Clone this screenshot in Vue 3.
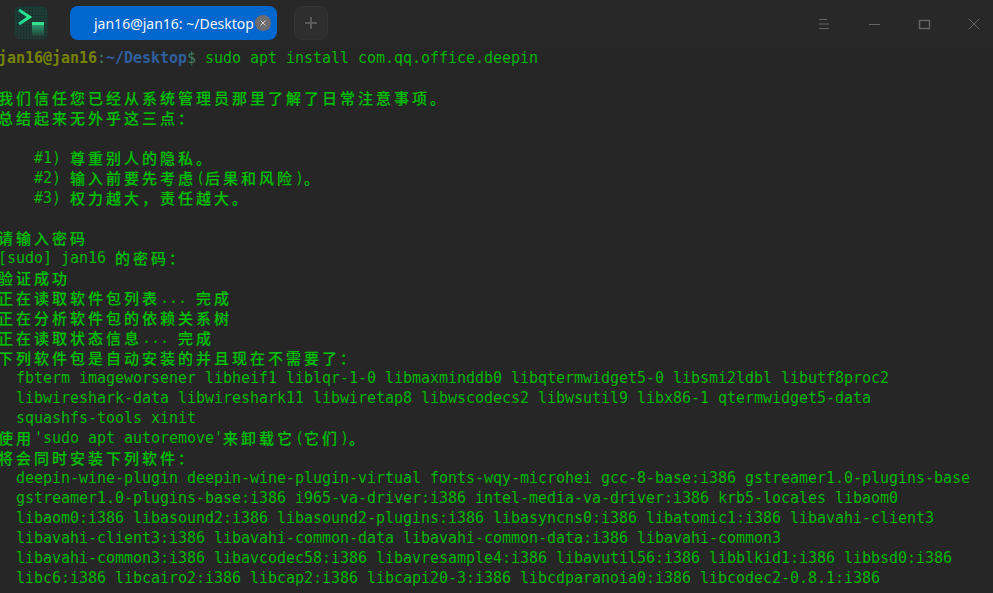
<script setup>
const lines = [
  '',
  '我们信任您已经从系统管理员那里了解了日常注意事项。',
  '总结起来无外乎这三点：',
  '',
  '    #1) 尊重别人的隐私。',
  '    #2) 输入前要先考虑(后果和风险)。',
  '    #3) 权力越大，责任越大。',
  '',
  '请输入密码',
  '[sudo] jan16 的密码：',
  '验证成功',
  '正在读取软件包列表... 完成',
  '正在分析软件包的依赖关系树',
  '正在读取状态信息... 完成',
  '下列软件包是自动安装的并且现在不需要了：',
  '  fbterm imageworsener libheif1 liblqr-1-0 libmaxminddb0 libqtermwidget5-0 libsmi2ldbl libutf8proc2',
  '  libwireshark-data libwireshark11 libwiretap8 libwscodecs2 libwsutil9 libx86-1 qtermwidget5-data',
  '  squashfs-tools xinit',
  "使用'sudo apt autoremove'来卸载它(它们)。",
  '将会同时安装下列软件：',
  '  deepin-wine-plugin deepin-wine-plugin-virtual fonts-wqy-microhei gcc-8-base:i386 gstreamer1.0-plugins-base',
  '  gstreamer1.0-plugins-base:i386 i965-va-driver:i386 intel-media-va-driver:i386 krb5-locales libaom0',
  '  libaom0:i386 libasound2:i386 libasound2-plugins:i386 libasyncns0:i386 libatomic1:i386 libavahi-client3',
  '  libavahi-client3:i386 libavahi-common-data libavahi-common-data:i386 libavahi-common3',
  '  libavahi-common3:i386 libavcodec58:i386 libavresample4:i386 libavutil56:i386 libblkid1:i386 libbsd0:i386',
  '  libc6:i386 libcairo2:i386 libcap2:i386 libcapi20-3:i386 libcdparanoia0:i386 libcodec2-0.8.1:i386',
]

const rows = lines.map((text) =>
  (text.match(/[^\x00-\x7f]+|[\x00-\x7f]+/g) || ['']).map((t) => ({
    t,
    cjk: /[^\x00-\x7f]/.test(t),
  })),
)
</script>

<template>
  <div class="window">
    <header class="titlebar">
      <svg class="logo" viewBox="0 0 34 34" width="34" height="34">
        <defs>
          <linearGradient id="logoBg" x1="0" y1="0" x2="0" y2="1">
            <stop offset="0" stop-color="#1d3f38" />
            <stop offset="1" stop-color="#233a34" />
          </linearGradient>
          <linearGradient id="logoFade" x1="0" y1="0" x2="0" y2="1">
            <stop offset="0" stop-color="#2b9a6e" />
            <stop offset="1" stop-color="#2b9a6e" stop-opacity="0.1" />
          </linearGradient>
          <linearGradient id="logoChev" x1="0" y1="0" x2="1" y2="0">
            <stop offset="0" stop-color="#1fcf9a" />
            <stop offset="1" stop-color="#2cf08e" />
          </linearGradient>
          <pattern id="logoGrid" width="3" height="3" patternUnits="userSpaceOnUse">
            <path d="M0 0.5 H3 M0.5 0 V3" stroke="#000" stroke-opacity="0.12" stroke-width="1" />
          </pattern>
        </defs>
        <rect width="34" height="34" rx="7" fill="url(#logoBg)" />
        <rect width="34" height="34" rx="7" fill="url(#logoGrid)" />
        <path d="M5 4 L15.5 11 L5 18" fill="none" stroke="url(#logoChev)" stroke-width="3" />
        <rect x="18" y="19" width="12" height="11" fill="url(#logoFade)" />
        <rect x="18" y="16" width="12" height="3" fill="#35e08c" />
      </svg>
      <div class="tab">
        <span class="tab-title">jan16@jan16: ~/Desktop</span>
        <span class="tab-close">
          <svg viewBox="0 0 8 8" width="8" height="8">
            <path d="M1.5 1.5 L6.5 6.5 M6.5 1.5 L1.5 6.5" stroke="#cfcfcf" stroke-width="1" />
          </svg>
        </span>
      </div>
      <div class="add">
        <svg viewBox="0 0 14 14" width="14" height="14">
          <path d="M7 1 V13 M1 7 H13" stroke="#5a5a5a" stroke-width="2" />
        </svg>
      </div>
      <div class="controls">
        <svg viewBox="0 0 30 16" width="30" height="16">
          <path d="M10 3.5 H18 M10 8 H20 M10 12.5 H20" stroke="#666" stroke-width="1" />
        </svg>
        <svg viewBox="0 0 30 16" width="30" height="16">
          <path d="M10 8.5 H21" stroke="#666" stroke-width="1" />
        </svg>
        <svg viewBox="0 0 30 16" width="30" height="16">
          <rect x="10.5" y="4.5" width="10" height="8" fill="none" stroke="#666" stroke-width="1.4" />
        </svg>
        <svg viewBox="0 0 30 16" width="30" height="16">
          <path d="M9.5 2.5 L20.5 13.5 M20.5 2.5 L9.5 13.5" stroke="#666" stroke-width="1" />
        </svg>
      </div>
    </header>
    <main class="terminal">
      <div class="line"><b class="user">jan16@jan16</b><span class="colon">:</span><b class="path">~/Desktop</b><span class="dollar">$</span> sudo apt install com.qq.office.deepin</div>
      <div v-for="(row, i) in rows" :key="i" class="line"><span
          v-for="(run, j) in row"
          :key="j"
          :class="{ cjk: run.cjk }"
        >{{ run.t }}</span></div>
    </main>
  </div>
</template>

<style scoped>
.window {
  width: 993px;
  height: 593px;
  overflow: hidden;
  background: #262626;
  display: flex;
  flex-direction: column;
}
.titlebar {
  height: 48px;
  flex: none;
  background: #282828;
  display: flex;
  align-items: flex-start;
  padding: 6px 4px 0 14px;
  box-sizing: border-box;
}
.logo {
  flex: none;
  margin-right: 22px;
}
.tab {
  width: 207px;
  height: 34px;
  box-sizing: border-box;
  background: #0067cf;
  border-radius: 8px;
  display: flex;
  align-items: center;
  padding-left: 24px;
  color: #f2f6fb;
  font: 14px "Noto Sans", sans-serif;
  margin-right: 17px;
}
.tab-title {
  white-space: nowrap;
  width: 161px;
  flex: none;
}
.tab-close {
  width: 16px;
  height: 16px;
  border-radius: 50%;
  background: #6e6e70;
  display: flex;
  align-items: center;
  justify-content: center;
  flex: none;
}
.add {
  width: 34px;
  height: 34px;
  box-sizing: border-box;
  background: #2e2e2e;
  border: 1px solid #343434;
  border-radius: 8px;
  display: flex;
  align-items: center;
  justify-content: center;
}
.controls {
  margin-left: auto;
  display: flex;
  gap: 20px;
  padding-top: 10px;
}
.terminal {
  flex: 1;
  margin-left: -2px;
  font: 15px/20px "DejaVu Sans Mono", monospace;
  letter-spacing: -0.03px;
  color: #00b400;
  white-space: pre;
}
.line {
  height: 20px;
}
.cjk {
  font-family: "Noto Sans CJK SC", sans-serif;
  font-weight: 500;
  line-height: 12px;
  letter-spacing: 3px;
  vertical-align: -1px;
  -webkit-text-stroke: 0.2px #00b800;
  color: #00bc00;
}
.user {
  color: #768300;
}
.colon {
  color: #3f7f5f;
}
.path {
  color: #2f5f9f;
}
.dollar {
  color: #3f7f5f;
}
</style>
